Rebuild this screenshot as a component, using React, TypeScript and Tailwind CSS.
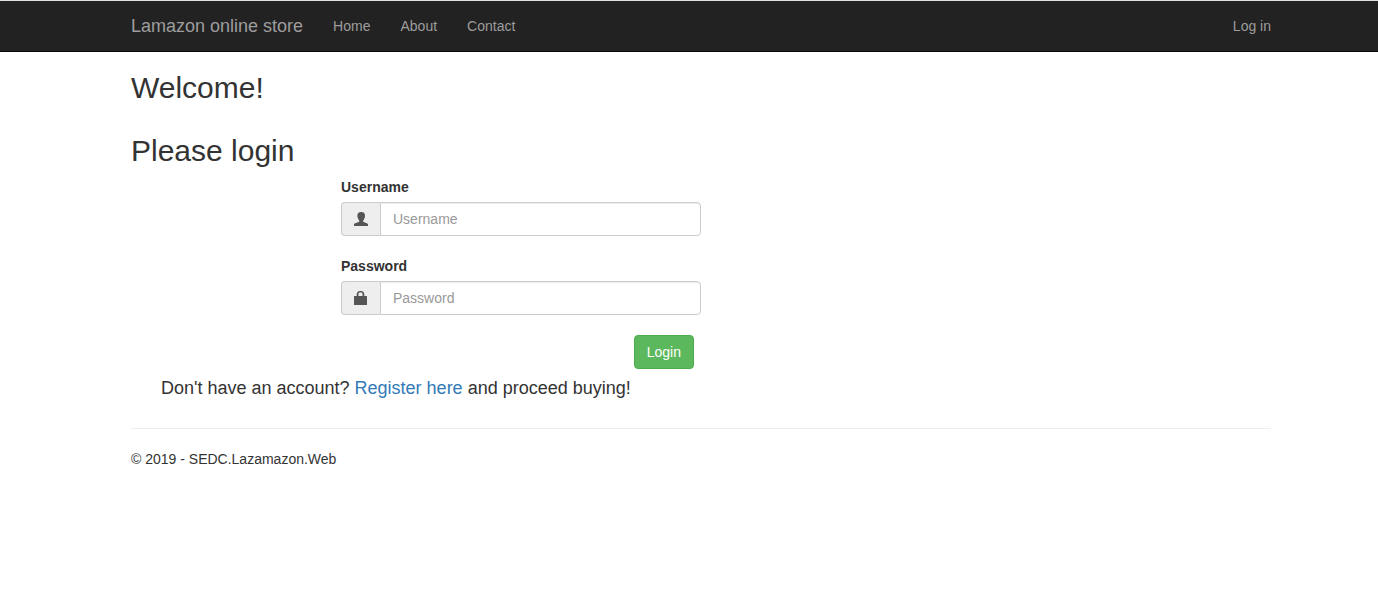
import type { ReactNode } from "react";

function Field({ label, type, icon }: { label: string; type: string; icon: ReactNode }) {
  return (
    <div>
      <label className="mb-[5px] block font-bold">{label}</label>
      <div className="flex h-[34px] w-[360px]">
        <span className="flex w-[39px] items-center justify-center rounded-l border border-r-0 border-[#ccc] bg-[#eee] text-[#555]">
          {icon}
        </span>
        <input
          type={type}
          placeholder={label}
          className="min-w-0 flex-1 rounded-r border border-[#ccc] bg-white px-3 py-1.5 shadow-[inset_0_1px_1px_rgba(0,0,0,0.075)] outline-none placeholder:text-[#999]"
        />
      </div>
    </div>
  );
}

const UserIcon = () => (
  <svg width="14" height="14" viewBox="0 0 14 14" fill="currentColor">
    <path d="M7.2 0C4.900 0 3.400 1.200 3.400 3.300c0 .8.200 1.200.1 1.700-.1.600.2 1.200.6 1.500.2.900.6 1.600 1.100 2.100v.8c0 .4-.2.600-.6.700L1.200 11.200c-.8.300-1.200.7-1.200 1.500V14h14v-1.300c0-.8-.4-1.200-1.200-1.500L9.800 10.100c-.4-.1-.6-.3-.6-.7v-.8c.5-.5.9-1.200 1.100-2.100.4-.3.700-.9.600-1.500-.1-.5.1-.9.1-1.700C11 1.200 9.500 0 7.200 0z" />
  </svg>
);

const LockIcon = () => (
  <svg width="14" height="14" viewBox="0 0 14 14" fill="currentColor">
    <path fillRule="evenodd" d="M2.700 5V3.400C2.700 1.300 4.100 0 5.900 0h1.200c1.800 0 3.200 1.300 3.200 3.400V5h2.100c.4 0 .6.200.6.600v7.800c0 .4-.2.600-.6.600H.6c-.4 0-.6-.2-.6-.6V5.600C0 5.200.2 5 .6 5zM4.500 5h4V3.200C8.500 2.100 7.900 1.600 7 1.600H6c-.9 0-1.500.5-1.500 1.600z" />
  </svg>
);

export default function App() {
  return (
    <div className="min-h-[609px] border-t border-[#dee1e6] bg-white font-['Liberation_Sans',Arial,sans-serif] text-[14px] leading-5 text-[#333]">
      <nav className="h-[51px] border-b border-[#080808] bg-[#222] text-[#9d9d9d]">
        <div className="ml-[131px] flex h-[50px] w-[1140px] items-center">
          <a className="mr-[15px] text-[18px]">Lamazon online store</a>
          <a className="px-[15px]">Home</a>
          <a className="px-[15px]">About</a>
          <a className="px-[15px]">Contact</a>
          <a className="ml-auto">Log in</a>
        </div>
      </nav>
      <main className="ml-[131px] w-[1140px]">
        <h2 className="pt-[19px] text-[30px] leading-[33px]">Welcome!</h2>
        <h2 className="mt-[30px] text-[30px] leading-[33px]">Please login</h2>
        <form className="mt-[10px] ml-[210px] w-[360px]">
          <Field label="Username" type="text" icon={<UserIcon />} />
          <div className="mt-5">
            <Field label="Password" type="password" icon={<LockIcon />} />
          </div>
          <div className="mt-5 flex justify-end pr-[7px]">
            <button type="button" className="h-[34px] rounded border border-[#4cae4c] bg-[#5cb85c] px-3 text-white">Login</button>
          </div>
        </form>
        <p className="mt-[9px] ml-[30px] text-[18px]">
          Don't have an account? <a className="text-[#337ab7]">Register here</a> and proceed buying!
        </p>
        <hr className="mt-[30px] mb-5 border-t border-[#eee]" />
        <footer>© 2019 - SEDC.Lazamazon.Web</footer>
      </main>
    </div>
  );
}
